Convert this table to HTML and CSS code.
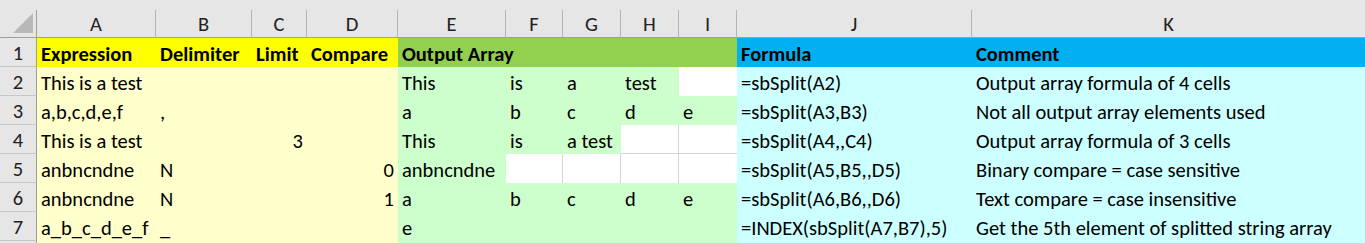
FILE: index.html
```html
<!DOCTYPE html>
<html>
<head>
<meta charset="utf-8">
<link rel="stylesheet" href="styles.css">
</head>
<body>
<div class="sheet">
  <div class="topbar"></div>
  <div class="grid">
    <div class="corner"><span class="tri"></span></div>
    <div class="ch">A</div><div class="ch">B</div><div class="ch">C</div><div class="ch">D</div>
    <div class="ch">E</div><div class="ch">F</div><div class="ch">G</div><div class="ch">H</div>
    <div class="ch">I</div><div class="ch">J</div><div class="ch last">K</div>

    <div class="rh">1</div>
    <div class="c b y">Expression</div><div class="c b y">Delimiter</div><div class="c b y">Limit</div><div class="c b y">Compare</div>
    <div class="c b g span5">Output Array</div>
    <div class="c b bl">Formula</div><div class="c b bl">Comment</div>

    <div class="rh">2</div>
    <div class="c ly">This is a test</div><div class="c ly"></div><div class="c ly"></div><div class="c ly"></div>
    <div class="c lg">This</div><div class="c lg">is</div><div class="c lg">a</div><div class="c lg">test</div><div class="c w"></div>
    <div class="c lc">=sbSplit(A2)</div><div class="c lc">Output array formula of 4 cells</div>

    <div class="rh">3</div>
    <div class="c ly">a,b,c,d,e,f</div><div class="c ly">,</div><div class="c ly"></div><div class="c ly"></div>
    <div class="c lg">a</div><div class="c lg">b</div><div class="c lg">c</div><div class="c lg">d</div><div class="c lg">e</div>
    <div class="c lc">=sbSplit(A3,B3)</div><div class="c lc">Not all output array elements used</div>

    <div class="rh">4</div>
    <div class="c ly">This is a test</div><div class="c ly"></div><div class="c ly num">3</div><div class="c ly"></div>
    <div class="c lg">This</div><div class="c lg">is</div><div class="c lg">a test</div><div class="c w gr gb"></div><div class="c w gb"></div>
    <div class="c lc">=sbSplit(A4,,C4)</div><div class="c lc">Output array formula of 3 cells</div>

    <div class="rh">5</div>
    <div class="c ly">anbncndne</div><div class="c ly">N</div><div class="c ly"></div><div class="c ly num">0</div>
    <div class="c lg">anbncndne</div><div class="c w gr"></div><div class="c w gr"></div><div class="c w gr"></div><div class="c w"></div>
    <div class="c lc">=sbSplit(A5,B5,,D5)</div><div class="c lc">Binary compare = case sensitive</div>

    <div class="rh">6</div>
    <div class="c ly">anbncndne</div><div class="c ly">N</div><div class="c ly"></div><div class="c ly num">1</div>
    <div class="c lg">a</div><div class="c lg">b</div><div class="c lg">c</div><div class="c lg">d</div><div class="c lg">e</div>
    <div class="c lc">=sbSplit(A6,B6,,D6)</div><div class="c lc">Text compare = case insensitive</div>

    <div class="rh">7</div>
    <div class="c ly">a_b_c_d_e_f</div><div class="c ly">_</div><div class="c ly"></div><div class="c ly"></div>
    <div class="c lg">e</div><div class="c lg"></div><div class="c lg"></div><div class="c lg"></div><div class="c lg"></div>
    <div class="c lc">=INDEX(sbSplit(A7,B7),5)</div><div class="c lc">Get the 5th element of splitted string array</div>

    <div class="rh"></div>
    <div class="c ly"></div><div class="c ly"></div><div class="c ly"></div><div class="c ly"></div>
    <div class="c lg"></div><div class="c lg"></div><div class="c lg"></div><div class="c lg"></div><div class="c lg"></div>
    <div class="c lc"></div><div class="c lc"></div>
  </div>
</div>
</body>
</html>
```

FILE: styles.css
```css
html, body {
  margin: 0;
  padding: 0;
  background: #ffffff;
  overflow: hidden;
}

.sheet {
  width: 1365px;
  font-family: Calibri, Carlito, "Open Sans", "Liberation Sans", sans-serif;
  font-size: 20.5px;
  color: #000;
}

.topbar {
  height: 10px;
  background: #e6e6e6;
}

.grid {
  display: grid;
  grid-template-columns: 37px 119px 96px 55px 91px 108px 57px 58px 58px 58px 235px 1fr;
  grid-template-rows: 28px;
  grid-auto-rows: 29px;
}

.corner {
  position: relative;
  background: #e6e6e6;
  border-right: 1px solid #9e9e9e;
  border-bottom: 1px solid #9e9e9e;
  box-sizing: border-box;
}

.tri {
  position: absolute;
  left: 13px;
  top: 3px;
  width: 0;
  height: 0;
  border-style: solid;
  border-width: 0 0 20px 20px;
  border-color: transparent transparent #b8b8b8 transparent;
}

.ch {
  background: #e6e6e6;
  border-right: 1px solid #b4b4b4;
  border-bottom: 1px solid #9e9e9e;
  box-sizing: border-box;
  text-align: center;
  padding-top: 1px;
  line-height: 26px;
  color: #222;
  overflow: hidden;
}

.ch.last {
  border-right: none;
}

.rh {
  background: #e6e6e6;
  border-right: 1px solid #9e9e9e;
  border-bottom: 1px solid #c6c6c6;
  box-sizing: border-box;
  text-align: center;
  padding-top: 3px;
  line-height: 25px;
  color: #222;
  overflow: hidden;
}

.c {
  box-sizing: border-box;
  padding: 3px 4px 0;
  line-height: 26px;
  white-space: nowrap;
  overflow: visible;
}

.b { font-weight: bold; }
.num { text-align: right; }
.span5 { grid-column: span 5; }

.y { background: #ffff00; }
.g { background: #92d050; }
.bl { background: #00b0f0; }
.ly { background: #ffffcc; }
.lg { background: #ccffcc; }
.lc { background: #ccffff; }
.w { background: #ffffff; }

.gr { border-right: 1px solid #d4d4d4; }
.gb { border-bottom: 1px solid #d4d4d4; }
```
